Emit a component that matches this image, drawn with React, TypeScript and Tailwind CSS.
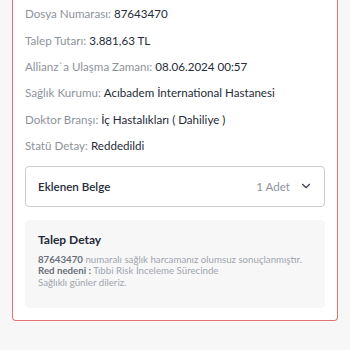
import { ChevronDown } from "lucide-react";

const rows: [string, string][] = [
  ["Dosya Numarası:", "87643470"],
  ["Talep Tutarı:", "3.881,63 TL"],
  ["Allianz`a Ulaşma Zamanı:", "08.06.2024 00:57"],
  ["Sağlık Kurumu:", "Acıbadem İnternational Hastanesi"],
  ["Doktor Branşı:", "İç Hastalıkları ( Dahiliye )"],
  ["Statü Detay:", "Reddedildi"],
];

export default function App() {
  return (
    <div className="h-[350px] w-[350px] overflow-hidden bg-[#f7f7f7] font-['Lato',sans-serif]">
      <div className="mx-3 -mt-4 rounded-b-[4px] border-[1.5px] border-t-0 border-[#e27373] bg-white px-3 pb-3 pt-[17px]">
        <div className="flex flex-col">
          {rows.map(([label, value]) => (
            <p key={label} className="flex h-[26.3px] items-center text-[11.6px]">
              <span className="text-[#8e939b]">{label}</span>
              <span className="ml-[3px] text-[#252b37]">{value}</span>
            </p>
          ))}
        </div>
        <div className="mt-[7px] flex h-[41px] items-center justify-between rounded-[4px] border border-[#c9cdd2] pl-[12px] pr-[11px]">
          <span className="text-[11.6px] font-semibold text-[#252b37]">Eklenen Belge</span>
          <span className="flex items-center gap-[9px] text-[11.6px] text-[#8e939b]">
            1 Adet
            <ChevronDown size={14} strokeWidth={2} className="text-[#3a4050]" />
          </span>
        </div>
        <div className="mt-[13px] rounded-[4px] bg-[#f7f7f8] px-[13px] pb-[19px] pt-[11px]">
          <h3 className="text-[12px] font-bold text-[#252b37]">Talep Detay</h3>
          <p className="mt-[5px] text-[9.7px] leading-[11.6px] text-[#a0a5ad]">
            <b className="font-bold text-[#6b7078]">87643470</b> numaralı sağlık harcamanız olumsuz sonuçlanmıştır.
            <br />
            <b className="font-bold text-[#6b7078]">Red nedeni :</b> Tıbbi Risk İnceleme Sürecinde
            <br />
            Sağlıklı günler dileriz.
          </p>
        </div>
      </div>
    </div>
  );
}
